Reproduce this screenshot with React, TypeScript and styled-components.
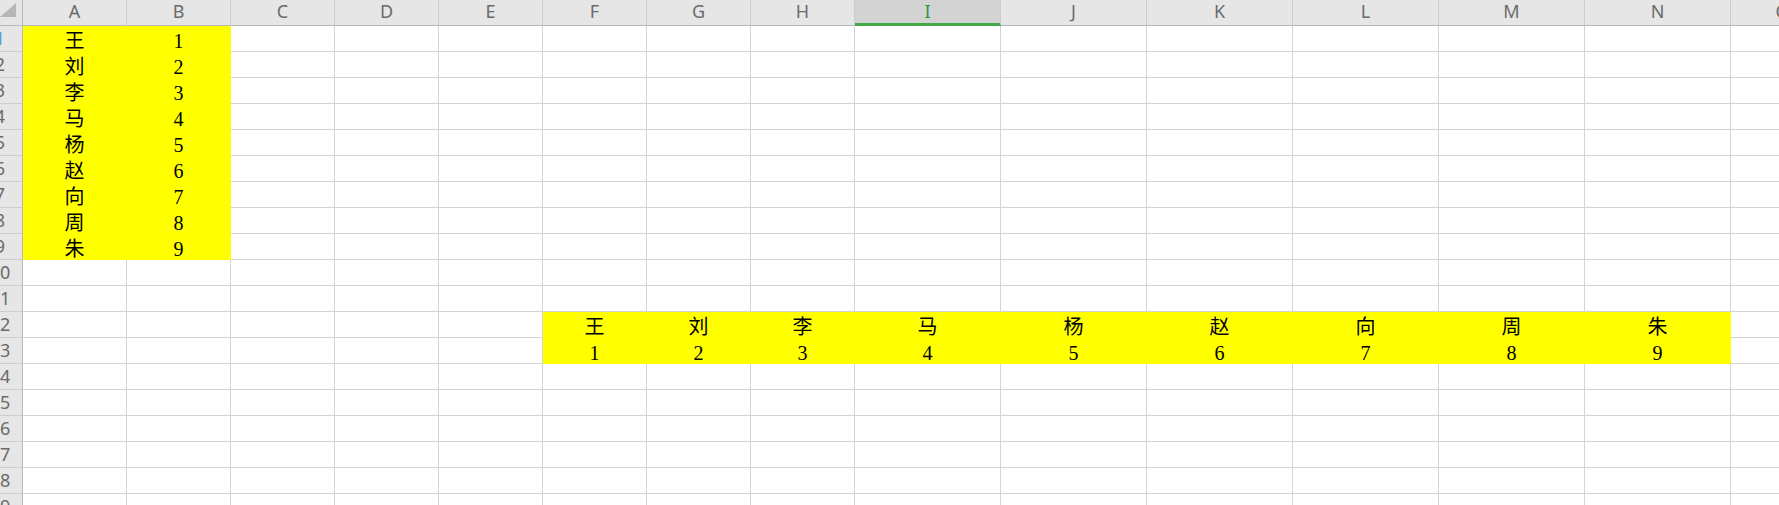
import React from 'react'
import styled, { createGlobalStyle } from 'styled-components'

// Column letters with their widths: A-H are narrow, I-N were widened
const COLUMNS: { name: string; width: number }[] = [
  ...'ABCDEFGH'.split('').map(name => ({ name, width: 104 })),
  ...'IJKLMN'.split('').map(name => ({ name, width: 146 })),
  { name: 'O', width: 104 }
]
const ROW_COUNT = 19
const ACTIVE_COL = 'I'
const ACTIVE_ROW = 1

const NAMES = ['王', '刘', '李', '马', '杨', '赵', '向', '周', '朱']

// cell contents keyed by address, e.g. "A1"
const DATA: Record<string, string> = {}
NAMES.forEach((name, i) => {
  DATA[`A${i + 1}`] = name
  DATA[`B${i + 1}`] = String(i + 1)
  const col = COLUMNS[5 + i].name
  DATA[`${col}12`] = name
  DATA[`${col}13`] = String(i + 1)
})

const isFilled = (col: string, row: number) => {
  const idx = COLUMNS.findIndex(c => c.name === col)
  if (row >= 1 && row <= 9 && idx <= 1) return true
  if ((row === 12 || row === 13) && idx >= 5 && idx <= 13) return true
  return false
}

const GlobalStyle = createGlobalStyle`
  html, body {
    margin: 0;
    padding: 0;
    background: #fff;
    overflow: hidden;
  }
`

const Sheet = styled.div<{ $columns: string }>`
  display: grid;
  grid-template-columns: 23px ${p => p.$columns};
  grid-template-rows: 26px repeat(${ROW_COUNT}, 26px);
  width: 1779px;
  height: 505px;
  overflow: hidden;
  font-family: 'Noto Sans', 'Open Sans', sans-serif;
`

const Corner = styled.div`
  box-sizing: border-box;
  background: #e6e6e6;
  border-right: 1px solid #b9b9b9;
  border-bottom: 1px solid #b9b9b9;
  svg {
    display: block;
  }
`

const ColHeader = styled.div<{ $active?: boolean }>`
  box-sizing: border-box;
  display: flex;
  justify-content: center;
  align-items: center;
  padding-bottom: ${p => (p.$active ? '1px' : '3px')};
  background: ${p => (p.$active ? '#d3d3d3' : '#e6e6e6')};
  border-right: 1px solid #cdcdcd;
  border-bottom: ${p => (p.$active ? '3px solid #43a84a' : '1px solid #b9b9b9')};
  color: ${p => (p.$active ? '#2f9448' : '#6b6b6b')};
  font-size: 18px;
  line-height: 1;
  white-space: nowrap;
`

const RowHeader = styled.div`
  box-sizing: border-box;
  overflow: hidden;
  background: #e6e6e6;
  border-right: 1px solid #b9b9b9;
  border-bottom: 1px solid #cdcdcd;
`

// row numbers are centred on the left edge, the window clips their left half
const RowNum = styled.div<{ $active?: boolean }>`
  width: 44px;
  margin-left: -22px;
  text-align: center;
  font-size: 18px;
  line-height: 25px;
  color: ${p => (p.$active ? '#5b9bd5' : '#6b6b6b')};
`

const Cell = styled.div<{ $fill?: boolean }>`
  box-sizing: border-box;
  display: flex;
  justify-content: center;
  align-items: flex-end;
  background: ${p => (p.$fill ? '#ffff00' : '#fff')};
  border-right: 1px solid ${p => (p.$fill ? '#ffff00' : '#d4d4d4')};
  border-bottom: 1px solid ${p => (p.$fill ? '#ffff00' : '#d4d4d4')};
  font-family: 'Liberation Serif', 'Noto Sans CJK SC', serif;
  font-size: 20px;
  line-height: 19px;
  color: #000;
  white-space: nowrap;
`

const CornerMark = () => (
  <svg width='22' height='25' viewBox='0 0 22 25'>
    <polygon points='0,17 16,3 16,17' fill='#b7b7b7' />
  </svg>
)

export default function App() {
  const rows = Array.from({ length: ROW_COUNT }, (_, i) => i + 1)
  return (
    <>
      <GlobalStyle />
      <Sheet $columns={COLUMNS.map(c => `${c.width}px`).join(' ')}>
        <Corner><CornerMark /></Corner>
        {COLUMNS.map(c => (
          <ColHeader key={c.name} $active={c.name === ACTIVE_COL}>{c.name}</ColHeader>
        ))}
        {rows.map(row => (
          <React.Fragment key={row}>
            <RowHeader>
              <RowNum $active={row === ACTIVE_ROW}>{row}</RowNum>
            </RowHeader>
            {COLUMNS.map(c => (
              <Cell key={c.name} $fill={isFilled(c.name, row)}>
                {DATA[`${c.name}${row}`] ?? ''}
              </Cell>
            ))}
          </React.Fragment>
        ))}
      </Sheet>
    </>
  )
}
